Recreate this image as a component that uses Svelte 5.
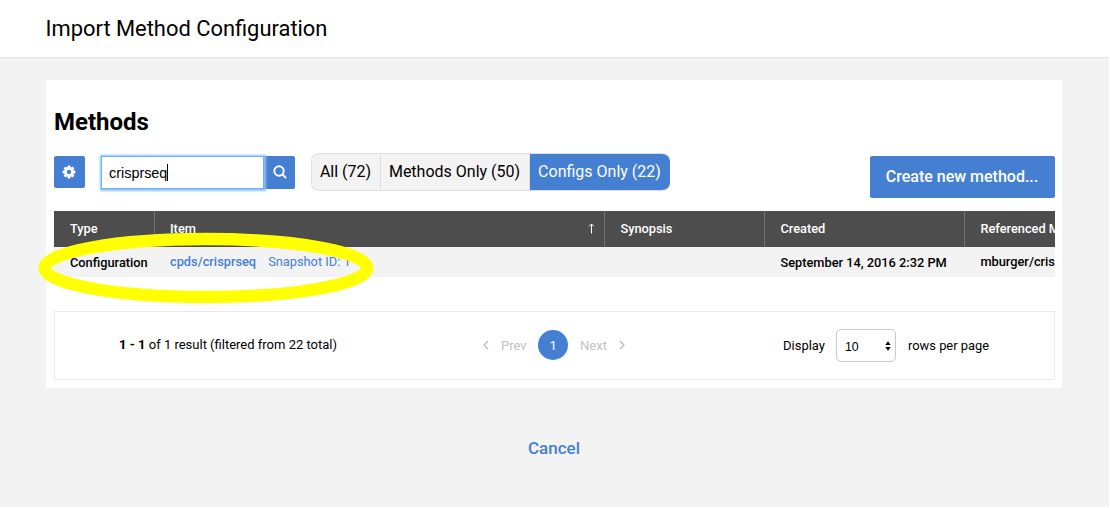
<script>
  const tabs = [
    { label: 'All (72)', width: 69 },
    { label: 'Methods Only (50)', width: 149 },
    { label: 'Configs Only (22)', width: 140, active: true }
  ];
  const columns = ['Type', 'Item', 'Synopsis', 'Created', 'Referenced Method'];
</script>

<div class="page">
  <header><span>Import Method Configuration</span></header>
  <main>
    <section class="panel">
      <h2><span>Methods</span></h2>
      <div class="toolbar">
        <button class="cog" aria-label="Columns">
          <svg width="14" height="14" viewBox="0 0 14 14"><g fill="#fff"><circle cx="7" cy="7" r="4.9" />{#each [0, 45, 90, 135] as a}<rect x="5.55" y="0.6" width="2.9" height="12.8" rx="0.5" transform="rotate({a} 7 7)" />{/each}</g><circle cx="7" cy="7" r="2.15" fill="#457fd2" /></svg>
        </button>
        <div class="search">
          <div class="field"><span>crisprseq</span><i></i></div>
          <button class="go" aria-label="Search">
            <svg width="14" height="14" viewBox="0 0 14 14" fill="none" stroke="#fff" stroke-width="1.9"><circle cx="6" cy="6" r="4.7" /><path d="M9.5 9.5L12.5 12.5" stroke-linecap="round" /></svg>
          </button>
        </div>
        <div class="tabs">
          {#each tabs as t}
            <div class="tab" class:active={t.active} style="width:{t.width}px"><span>{t.label}</span></div>
          {/each}
        </div>
        <button class="create"><span>Create new method...</span></button>
      </div>
      <div class="table">
        <div class="row head">
          {#each columns as c}
            <div class="cell"><span>{c}</span>{#if c === 'Item'}<svg class="sort" width="7" height="11" viewBox="0 0 7 11" fill="none" stroke="#fff"><path d="M3.5 10.5V1M1.2 3.4L3.5 1L5.8 3.4" /></svg>{/if}</div>
          {/each}
        </div>
        <div class="row body">
          <div class="cell low"><span>Configuration</span></div>
          <div class="cell"><a class="name">cpds/crisprseq</a><a class="snap">Snapshot ID: 1</a></div>
          <div class="cell"></div>
          <div class="cell low"><span>September 14, 2016 2:32 PM</span></div>
          <div class="cell"><span>mburger/crisprseq</span></div>
        </div>
      </div>
      <footer>
        <div class="count"><b>1 - 1</b> of 1 result (filtered from 22 total)</div>
        <div class="pager">
          <svg width="6" height="10" viewBox="0 0 6 10"><path d="M5 1L1 5L5 9" /></svg>
          <span class="prev">Prev</span>
          <span class="current">1</span>
          <span class="next">Next</span>
          <svg width="6" height="10" viewBox="0 0 6 10"><path d="M1 1L5 5L1 9" /></svg>
        </div>
        <div class="display">
          <span>Display</span>
          <div class="select"><span>10</span><svg width="6" height="10" viewBox="0 0 6 10"><path d="M0.3 4L3 0.3L5.7 4ZM0.3 6L3 9.7L5.7 6Z" /></svg></div>
          <span class="rows">rows per page</span>
        </div>
      </footer>
    </section>
    <div class="cancel"><a>Cancel</a></div>
  </main>
  <svg class="mark" width="336" height="72" viewBox="0 0 336 72"><ellipse cx="168" cy="36" rx="161.5" ry="29" fill="none" stroke="#ff0" stroke-width="12.3" /></svg>
</div>

<style>
  :global(body) { margin: 0; background: #fff; }
  * { box-sizing: border-box; }
  .page { position: relative; width: 1109px; height: 507px; background: #f3f3f3; font-family: Roboto, sans-serif; font-size: 13px; color: #000; overflow: hidden; white-space: nowrap; }
  header { height: 58px; background: #fff; border-bottom: 1px solid #e3e3e3; padding: 0 45.5px; display: flex; align-items: center; font-size: 21.9px; }
  main { padding: 22px 47px 0 46px; }
  .panel { height: 308px; width: 1016.3px; background: #fff; padding: 28px 8px 0; }
  h2 { margin: 0; font-size: 24px; line-height: 28px; font-weight: 700; height: 45px; }
  button { border: 0; margin: 0; padding: 0; background: #457fd2; color: #fff; font-family: inherit; display: flex; align-items: center; justify-content: center; border-radius: 2px; }
  .toolbar { display: flex; align-items: flex-start; height: 58px; width: 1000.5px; }
  .cog { width: 31px; height: 32px; padding: 0 1px 1px 0; margin: 3px 16px 0 0; }
  .search { display: flex; margin-top: 3px; width: 194px; }
  .field { position: relative; width: 163px; height: 33px; padding: 1px 0 0 7px; background: #fff; border: 1px solid #70b0f5; box-shadow: 0 0 2px 1.5px #8bc0f8; display: flex; align-items: center; font: 14.4px "Liberation Sans", sans-serif; }
  .field i { width: 1px; height: 17px; margin-top: -2px; background: #000; }
  .go { width: 31px; height: 33px; padding: 0 0 1px 0; border-radius: 0 2px 2px 0; }
  .tabs { display: flex; height: 38px; margin-left: 16px; border-radius: 8px; overflow: hidden; border: 1px solid #dfdfdf; border-right: 0; font-size: 16px; width: 359px; }
  .tab { background: #f3f3f3; border-right: 1px solid #dfdfdf; padding: 0 1px 2px 0; display: flex; align-items: center; justify-content: center; flex: none; }
  .tab.active { background: #457fd2; color: #fff; border: 0; }
  .create { margin: 3px 0 0 auto; padding-bottom: 2px; width: 185px; height: 42px; font-size: 16px; font-weight: 500; }
  .table { width: 1000.5px; overflow: hidden; }
  .row { display: grid; grid-template-columns: 100px 450.4px 160px 200px 240px; font-weight: 500; font-size: 12.8px; }
  .cell { display: flex; align-items: center; padding-left: 15px; }
  .head { height: 36px; background: #4d4d4d; color: #fff; }
  .head .cell { border-left: 1px solid #717171; padding-bottom: 1px; }
  .head .cell:first-child { border-left-color: transparent; }
  .sort { margin: 0 9px 0 auto; }
  .body { height: 30px; background: #f3f3f3; }
  .body .cell { padding: 0 0 1px 16px; }
  .body .low { padding-bottom: 0; }
  a { color: #457fd2; }
  .snap { font-weight: 400; margin-left: 12px; }
  footer { margin-top: 34px; height: 69px; border: 1px solid #ebebeb; display: grid; grid-template-columns: 427.5px 300px 1fr; align-items: center; width: 1000.5px; padding-bottom: 1px; }
  .count { padding-left: 64px; padding-bottom: 1px; }
  .pager { display: flex; align-items: center; color: #c2c2c2; }
  .pager svg { fill: none; stroke: #b8b8b8; stroke-width: 1.2; }
  .prev { margin: 0 11.5px 0 12.5px; }
  .current { width: 30px; height: 30px; border-radius: 50%; background: #457fd2; color: #fff; display: flex; align-items: center; justify-content: center; }
  .next { margin: 0 12px; }
  .display { display: flex; align-items: center; padding-left: 0.5px; }
  .rows { font-size: 12.9px; }
  .select { width: 60px; height: 33px; margin: 1px 12px 0 11px; border: 1px solid #c8c8c8; border-radius: 5px; padding: 2px 4px 0 8px; display: flex; align-items: center; justify-content: space-between; font: 12.3px "Liberation Sans", sans-serif; }
  .select svg { margin-bottom: 2px; }
  .cancel { text-align: center; font-size: 17px; font-weight: 500; line-height: 20px; margin-top: 50px; }
  .mark { position: absolute; left: 37.5px; top: 232px; }
</style>
